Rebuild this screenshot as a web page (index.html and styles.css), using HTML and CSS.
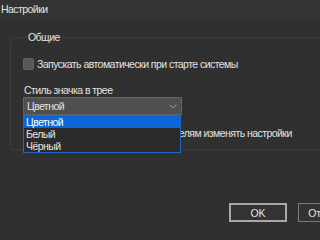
FILE: index.html
```html
<!DOCTYPE html>
<html lang="ru">
<head>
    <meta charset="UTF-8">
    <title>Настройки</title>
    <link rel="stylesheet" href="styles.css">
</head>
<body>
    <div class="window">
        <div class="titlebar">Настройки</div>

        <fieldset class="group">
            <legend>Общие</legend>

            <label class="check-row">
                <span class="check-box"></span>
                <span>Запускать автоматически при старте системы</span>
            </label>

            <div class="field-label">Стиль значка в трее</div>
            <div class="combo">
                <div class="combo-box">
                    <span>Цветной</span>
                    <svg class="chevron" width="8" height="5" viewBox="0 0 8 5">
                        <path d="M0.5 0.5 L4 4 L7.5 0.5" fill="none" stroke="#9a9a9a" stroke-width="1"/>
                    </svg>
                </div>
                <ul class="combo-list">
                    <li class="selected">Цветной</li>
                    <li>Белый</li>
                    <li>Чёрный</li>
                </ul>
            </div>

            <label class="check-row">
                <span class="check-box"></span>
                <span>Не разрешать другим пользователям изменять настройки</span>
            </label>
        </fieldset>

        <div class="button-row">
            <button class="btn btn-default">OK</button>
            <button class="btn">Отмена</button>
        </div>
    </div>
</body>
</html>
```

FILE: styles.css
```css
html, body {
    margin: 0;
    padding: 0;
}
body {
    width: 320px;
    height: 240px;
    overflow: hidden;
    background-color: #303030;
    color: #e2e2e2;
    font-family: "Liberation Sans", Arial, sans-serif;
    font-size: 10.5px;
    letter-spacing: -0.55px;
}
.window {
    width: 400px;
}
.titlebar {
    height: 20px;
    line-height: 18px;
    padding-left: 1px;
    background-color: #333333;
}
.group {
    margin: 10px 0 0 10px;
    padding: 0 0 0 12px;
    height: 120px;
    border: 1px solid #3e3e3e;
    border-radius: 4px;
    box-sizing: border-box;
    width: 390px;
}
.group legend {
    padding: 0 1px;
    margin-left: 4px;
    line-height: 14px;
}
.check-row {
    display: flex;
    align-items: center;
    gap: 3px;
    height: 12px;
    margin-top: 14px;
}
.check-box {
    width: 9px;
    height: 10px;
    background-color: #575757;
    border: 1px solid #626262;
    border-radius: 2px;
}
.field-label {
    margin-top: 14px;
    line-height: 12px;
    padding-left: 1px;
}
.combo {
    position: relative;
    width: 159px;
    margin-top: 1px;
}
.combo-box {
    display: flex;
    justify-content: space-between;
    align-items: center;
    height: 18px;
    box-sizing: border-box;
    padding: 0 4px 0 3px;
    background-color: #4f4f4f;
    border: 1px solid #626262;
}
.chevron {
    margin-top: 1px;
}
.combo-list {
    position: absolute;
    top: 18px;
    left: 0;
    width: 158px;
    box-sizing: border-box;
    margin: 0;
    padding: 0;
    list-style: none;
    background-color: #2b2b2b;
    border: 1px solid #1f67c7;
    z-index: 2;
}
.combo-list li {
    height: 12px;
    line-height: 12px;
    padding-left: 2px;
}
.combo-list li.selected {
    background-color: #0a66d6;
    color: #ffffff;
}
.group .check-row:last-child {
    margin-top: 12px;
}
.button-row {
    display: flex;
    gap: 11px;
    padding-left: 229px;
    margin-top: 53px;
}
.btn {
    width: 58px;
    height: 19px;
    padding: 0;
    background-color: #333333;
    color: #e2e2e2;
    font-family: "Liberation Sans", Arial, sans-serif;
    font-size: 10.5px;
    border: 1px solid #7a7a7a;
    flex-shrink: 0;
}
.btn-default {
    border: 2px solid #a8a8a8;
}
```
